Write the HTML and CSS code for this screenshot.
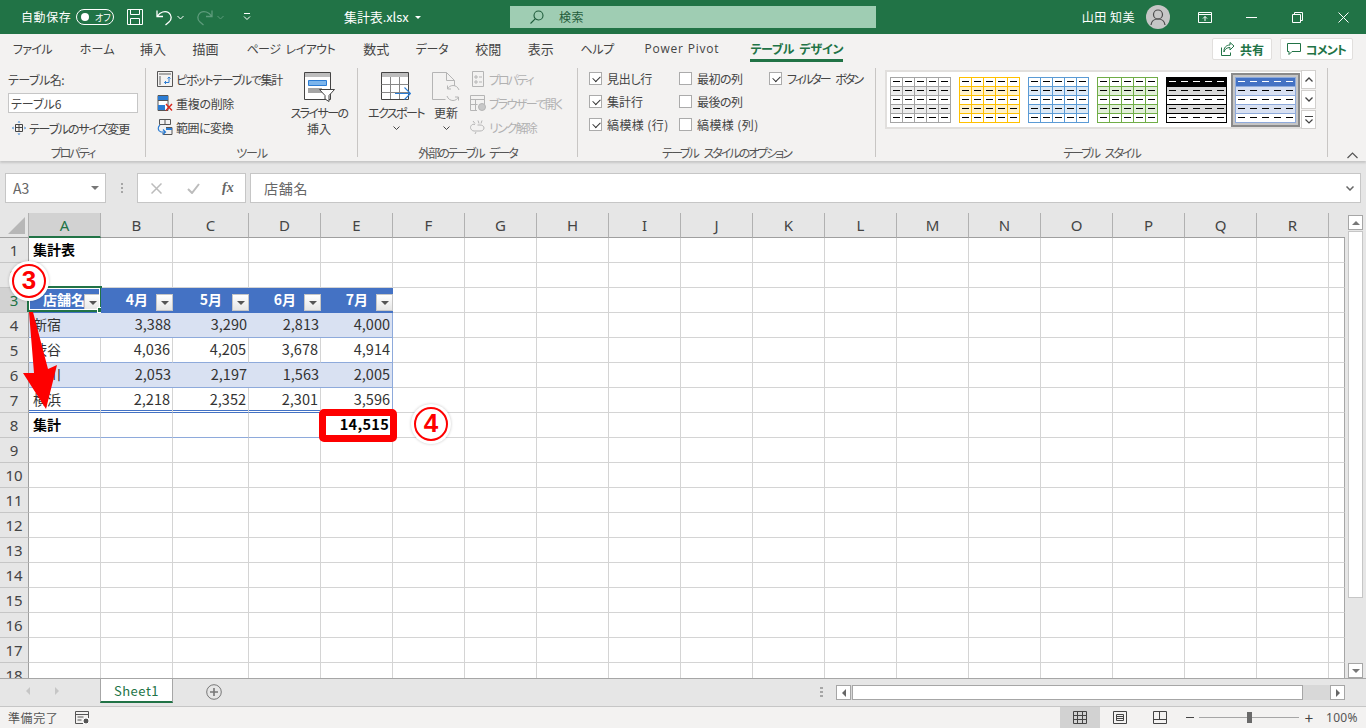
FILE: index.html
```html
<!DOCTYPE html>
<html lang="ja">
<head>
  <meta charset="UTF-8" />
  <title>集計表.xlsx - Excel</title>
  <link rel="stylesheet" href="styles.css">
</head>
<body>
  <!-- shared picture of a table style, coloured through css variables -->
  <svg class="defs" width="0" height="0" aria-hidden="true">
    <symbol id="style-thumb" viewBox="0 0 61 46">
      <rect width="61" height="46" fill="#fff"/>
      <rect y="0" width="61" height="9" fill="var(--head)"/>
      <rect y="9" width="61" height="9" fill="var(--band)"/>
      <rect y="27" width="61" height="9" fill="var(--band)"/>
      <path stroke="var(--vline)" fill="none" d="M12.5 0v46M24.5 0v46M36.5 0v46M48.5 0v46"/>
      <path stroke="var(--line)" fill="none" d="M0 9.5h61M0 18.5h61M0 27.5h61M0 36.5h61"/>
      <rect x=".5" y=".5" width="60" height="45" fill="none" stroke="var(--line)"/>
      <path stroke="var(--hdash)" fill="none" d="M3 4.5h7M15 4.5h7M27 4.5h7M39 4.5h7M51 4.5h7"/>
      <path stroke="#000" fill="none" d="M3 13.5h7M15 13.5h7M27 13.5h7M39 13.5h7M51 13.5h7M3 22.5h7M15 22.5h7M27 22.5h7M39 22.5h7M51 22.5h7M3 31.5h7M15 31.5h7M27 31.5h7M39 31.5h7M51 31.5h7M3 40.5h7M15 40.5h7M27 40.5h7M39 40.5h7M51 40.5h7"/>
    </symbol>
  </svg>

  <header class="titlebar">
    <div class="qat">
      <span class="autosave">自動保存</span>
      <span class="toggle"><i></i><b>オフ</b></span>
      <svg class="qat-save" width="16" height="16" viewBox="0 0 16 16" fill="none" stroke="#fff"><path d="M.5.500h15v15H.5zM3.500.500v5h9v-5M3.500 15.500v-6h9v6"/></svg>
      <svg class="qat-undo" width="17" height="17" viewBox="0 0 17 17" fill="none" stroke="#fff" stroke-width="1.300"><path d="M1 1.500v6h6M1.500 7C4 3 9 1.500 12.500 3.500c3.500 2.500 3.500 7 .5 9.500l-3.500 3"/></svg>
      <svg class="qat-caret" width="7" height="5" viewBox="0 0 7 5" fill="none" stroke="#fff"><path d="M.5 1l3 3 3-3"/></svg>
      <svg class="qat-redo" width="17" height="17" viewBox="0 0 17 17" fill="none" stroke="#5d9b7b" stroke-width="1.300"><path d="M16 1.500v6h-6M15.500 7C13 3 8 1.500 4.500 3.500c-3.500 2.500-3.500 7-.5 9.500l3.500 3"/></svg>
      <svg class="qat-caret" width="7" height="5" viewBox="0 0 7 5" fill="none" stroke="#5d9b7b"><path d="M.5 1l3 3 3-3"/></svg>
      <svg class="qat-more" width="8" height="8" viewBox="0 0 8 8" fill="none" stroke="#fff"><path d="M1 .5h6M1 3.500l3 3 3-3"/></svg>
    </div>
    <div class="filename"><span>集計表.xlsx</span><i class="down-caret"></i></div>
    <div class="search">
      <svg width="14" height="14" viewBox="0 0 14 14" fill="none" stroke="#1f5c3b" stroke-width="1.100"><circle cx="8.500" cy="5.500" r="4.500"/><path d="M5.200 8.800L.5 13.500"/></svg>
      <span>検索</span>
    </div>
    <div class="account">
      <span class="user-name">山田 知美</span>
      <span class="avatar"><svg width="24" height="24" viewBox="0 0 24 24" fill="none" stroke="#4b4b4b" stroke-width="1.200"><circle cx="12" cy="9.500" r="4.500"/><path d="M5 20c.5-4 3.500-6 7-6s6.500 2 7 6"/></svg></span>
      <span class="win-btn"><svg width="14" height="11" viewBox="0 0 14 11" fill="none" stroke="#fff"><path d="M.5.500h13v10H.5zM.5 2.500h13M7 9V4.500M5 6.500l2-2 2 2"/></svg></span>
      <span class="win-btn"><svg width="11" height="1" viewBox="0 0 11 1"><rect width="11" height="1" fill="#fff"/></svg></span>
      <span class="win-btn"><svg width="11" height="11" viewBox="0 0 11 11" fill="none" stroke="#fff"><path d="M.5 2.500h8v8h-8zM2.500 2.500v-2h8v8h-2"/></svg></span>
      <span class="win-btn"><svg width="11" height="11" viewBox="0 0 11 11" fill="none" stroke="#fff"><path d="M.5.500l10 10M10.500.500l-10 10"/></svg></span>
    </div>
  </header>

  <nav class="tabs">
    <a class="tab tab-file">ファイル</a>
    <a class="tab tab-home">ホーム</a>
    <a class="tab tab-kanji">挿入</a>
    <a class="tab tab-kanji">描画</a>
    <a class="tab tab-page">ページ レイアウト</a>
    <a class="tab tab-kanji">数式</a>
    <a class="tab tab-long">データ</a>
    <a class="tab tab-kanji">校閲</a>
    <a class="tab tab-kanji">表示</a>
    <a class="tab tab-long">ヘルプ</a>
    <a class="tab tab-latin">Power Pivot</a>
    <a class="tab tab-active">テーブル デザイン</a>
    <div class="tab-actions">
      <button class="action-btn share-btn"><svg width="15" height="15" viewBox="0 0 15 15" fill="none" stroke="#217346"><path d="M1.500 5.500v8h9v-3M4 10c.5-3 3-4.500 6-4.500V8l4-4-4-3.500V3C6 3 3.500 6 4 10z"/></svg>共有</button>
      <button class="action-btn comment-btn"><svg width="14" height="14" viewBox="0 0 14 14" fill="none" stroke="#217346"><path d="M.5 1.500h13v8H5l-3 3v-3H.5z"/></svg><span class="ls-08">コメント</span></button>
    </div>
  </nav>

  <section class="ribbon">
    <div class="group group-props">
      <div class="group-body props-body">
        <label class="field-label ls-05">テーブル名:</label>
        <input class="name-input" value="テーブル6" />
        <div class="small-cmd resize-cmd">
          <svg width="14" height="16" viewBox="0 0 14 16" fill="none"><path d="M3.500 4.500h7v7h-7zM3.500 7.500h7M7 4.500v7" stroke="#444"/><path d="M7 1L5.500 2.500h3zM7 15l-1.500-1.500h3zM0 8l1.500-1.500v3zM14 8l-1.500-1.500v3z" fill="#2b7cd3"/></svg>
          <span class="ls-12">テーブルのサイズ変更</span>
        </div>
      </div>
      <div class="group-label ls-20">プロパティ</div>
    </div>

    <div class="group group-tools">
      <div class="group-body">
        <div class="small-list tools-list">
          <div class="small-cmd">
            <svg width="16" height="16" viewBox="0 0 16 16" fill="none"><path d="M.5.500h15v15H.5z" stroke="#555"/><path d="M2 2h12v2H2zM2 5h2v9H2z" fill="#aaa"/><path d="M12 6v5.500H7.500M9 10l-1.500 1.500L9 13M10.500 7.500L12 6l1.500 1.500" stroke="#2b7cd3"/></svg>
            <span class="ls-13">ピボットテーブルで集計</span>
          </div>
          <div class="small-cmd">
            <svg width="16" height="16" viewBox="0 0 16 16" fill="none"><path d="M1 .5h10v15H1z" fill="#fff" stroke="#555"/><path d="M1 1h10v4H1zM1 10h7v5H1z" fill="#2b7cd3"/><path d="M1 5.500h10" stroke="#555"/><path d="M9 9l6 6.500M15 9l-6 6.500" stroke="#d9261c" stroke-width="1.400"/></svg>
            <span class="ls-03">重複の削除</span>
          </div>
          <div class="small-cmd">
            <svg width="16" height="16" viewBox="0 0 16 16" fill="none"><path d="M2.500.5h11v5h-11zM8 .5v5" stroke="#555"/><path d="M9 8.500h6v7H6v-2" stroke="#555"/><path d="M9 9h6v2H9z" fill="#2b7cd3"/><path d="M3 6C.5 8 .5 12 4 13h4M6 10.500L8.500 13 6 15.500" stroke="#2b7cd3" stroke-width="1.200"/></svg>
            <span class="ls-05">範囲に変換</span>
          </div>
        </div>
        <div class="large-cmd slicer-cmd">
          <svg width="31" height="30" viewBox="0 0 31 30" fill="none"><path d="M.5.500h26v27H.5z" fill="#fff" stroke="#444"/><path d="M1 1h25v4H1z" fill="#bdbdbd"/><path d="M4.500 8.500h18v5h-18z" fill="#7cb5ec" stroke="#2b7cd3"/><path d="M4 16h14v5H4z" fill="#a5a5a5"/><path d="M15.500 17.500h15l-5.500 6v6l-4-2.500v-3.500z" fill="#fff" stroke="#444"/></svg>
          <span><span class="ls-16">スライサーの</span><br>挿入</span>
        </div>
      </div>
      <div class="group-label ls-12">ツール</div>
    </div>

    <div class="group group-external">
      <div class="group-body">
        <div class="large-cmd export-cmd">
          <svg width="30" height="28" viewBox="0 0 30 28" fill="none"><path d="M.5.500h27v27H.5z" fill="#fff" stroke="#444"/><path d="M1 1h26v4H1z" fill="#bdbdbd"/><path d="M.5 12.500h27M.5 20.500h27M9.500 5v22M18.500 5v22" stroke="#888"/><path d="M14 21.500h15M23.500 15.500l6 6-6 6" stroke="#2b7cd3" stroke-width="1.100"/></svg>
          <span class="ls-16">エクスポート</span>
          <svg class="chev" width="7" height="4" viewBox="0 0 7 4" fill="none" stroke="#444"><path d="M.5.500l3 3 3-3"/></svg>
        </div>
        <div class="large-cmd refresh-cmd">
          <svg width="28" height="29" viewBox="0 0 28 29" fill="none" stroke="#b5b5b5"><path d="M.5.500h14l8 8V14M14.500.500v8h8M.5.500v27h13"/><path d="M27 18c-1-3-3.500-4.500-6-4.500-2.500 0-4.500 1.500-5.500 3.500M15.500 13.500V17h3.500M15 24c1 3 3.500 4.500 6 4.500s4.500-1.500 5.500-3.500M26.500 28.500V25H23"/></svg>
          <span>更新</span>
          <svg class="chev" width="7" height="4" viewBox="0 0 7 4" fill="none" stroke="#444"><path d="M.5.500l3 3 3-3"/></svg>
        </div>
        <div class="small-list external-list">
          <div class="small-cmd cmd-off">
            <svg width="16" height="16" viewBox="-2 0 16 16" fill="none" stroke="#b5b5b5"><path d="M.5.500h11v15H.5zM3 5h2v2H3zM7 6h3M3 10h2v2H3zM7 11h3"/></svg>
            <span class="ls-20">プロパティ</span>
          </div>
          <div class="small-cmd cmd-off">
            <svg width="16" height="16" viewBox="0 0 16 16" fill="none" stroke="#b5b5b5"><path d="M.5.500h14v9M7 15.500H.5V.500M.5 4.500h14M.5 9.500h7M5.500 4.500v11"/><circle cx="12" cy="12" r="3.500" fill="#c8c8c8"/></svg>
            <span class="ls-16">ブラウザーで開く</span>
          </div>
          <div class="small-cmd cmd-off">
            <svg width="16" height="16" viewBox="0 0 16 16" fill="none" stroke="#b5b5b5"><path d="M5 5.500C2 4.500.5 7 .5 8.500S2 12 4 12h6c2 0 4-1 4-3s-2-3-4-3H7.500M8 1.500l1 3M3 2l2 2.500M12 1.500l-1 3M5 15l1-2"/></svg>
            <span class="ls-16">リンク解除</span>
          </div>
        </div>
      </div>
      <div class="group-label ls-20 ws-gap">外部のテーブル データ</div>
    </div>

    <div class="group group-options">
      <div class="group-body options-grid">
        <label class="opt ls-03"><i class="check on"></i>見出し行</label>
        <label class="opt ls-05"><i class="check"></i>最初の列</label>
        <label class="opt ls-20 ws-gap"><i class="check on"></i>フィルター ボタン</label>
        <label class="opt"><i class="check on"></i>集計行</label>
        <label class="opt ls-05"><i class="check"></i>最後の列</label>
        <span></span>
        <label class="opt opt-wide"><i class="check on"></i>縞模様 (行)</label>
        <label class="opt opt-wide"><i class="check"></i>縞模様 (列)</label>
        <span></span>
      </div>
      <div class="group-label ls-20 ws-gap">テーブル スタイルのオプション</div>
    </div>

    <div class="group group-styles">
      <div class="group-body">
        <div class="gallery">
          <div class="gallery-items">
            <svg class="thumb th-gray"><use href="#style-thumb"/></svg>
            <svg class="thumb th-gold"><use href="#style-thumb"/></svg>
            <svg class="thumb th-blue"><use href="#style-thumb"/></svg>
            <svg class="thumb th-green"><use href="#style-thumb"/></svg>
            <svg class="thumb th-black"><use href="#style-thumb"/></svg>
            <span class="thumb-picked"><svg class="thumb th-picked"><use href="#style-thumb"/></svg></span>
          </div>
          <div class="gallery-arrows">
            <span><svg width="8" height="5" viewBox="0 0 8 5" fill="none" stroke="#444" stroke-width="1.300"><path d="M.5 4.500L4 1l3.500 3.500"/></svg></span>
            <span><svg width="8" height="5" viewBox="0 0 8 5" fill="none" stroke="#444" stroke-width="1.300"><path d="M.5.500L4 4l3.500-3.500"/></svg></span>
            <span><svg width="8" height="8" viewBox="0 0 8 8" fill="none" stroke="#444" stroke-width="1.200"><path d="M0 .5h8M.5 3.500L4 7l3.500-3.500"/></svg></span>
          </div>
        </div>
      </div>
      <div class="group-label ls-20 ws-gap">テーブル スタイル</div>
    </div>
    <svg class="collapse" width="11" height="7" viewBox="0 0 11 7" fill="none" stroke="#555" stroke-width="1.200"><path d="M.5 6l5-5 5 5"/></svg>
  </section>

  <section class="formula-bar">
    <div class="name-box"><span>A3</span><i class="small-tri"></i></div>
    <div class="fx-dots"><i></i><i></i><i></i></div>
    <div class="fx-buttons">
      <svg width="11" height="11" viewBox="0 0 11 11" fill="none" stroke="#bcbcbc" stroke-width="1.500"><path d="M.5.500l10 10M10.500.500l-10 10"/></svg>
      <svg width="13" height="11" viewBox="0 0 13 11" fill="none" stroke="#bcbcbc" stroke-width="2"><path d="M1 6l4 4 7-9"/></svg>
      <span class="fx-label">fx</span>
    </div>
    <div class="fx-input">店舗名<svg width="8" height="5" viewBox="0 0 8 5" fill="none" stroke="#666" stroke-width="1.500"><path d="M.5.500L4 4l3.500-3.500"/></svg></div>
  </section>

  <section class="sheet-main">
    <div class="grid-wrap">
      <table class="grid">
        <colgroup>
          <col class="c-head"><col class="c-72"><col class="c-72"><col class="c-76">
          <col class="c-72"><col class="c-72"><col class="c-72"><col class="c-72"><col class="c-72"><col class="c-72">
          <col class="c-72"><col class="c-72"><col class="c-72"><col class="c-72"><col class="c-72"><col class="c-72">
          <col class="c-72"><col class="c-72"><col class="c-72"><col class="c-s">
        </colgroup>
        <thead>
          <tr><th class="corner"><i></i></th><th class="col-on">A</th><th>B</th><th>C</th><th>D</th><th>E</th><th>F</th><th>G</th><th>H</th><th>I</th><th>J</th><th>K</th><th>L</th><th>M</th><th>N</th><th>O</th><th>P</th><th>Q</th><th>R</th><th class="col-s"></th></tr>
        </thead>
        <tbody>
          <tr><th>1</th><td class="bold txt">集計表</td><td></td><td></td><td></td><td></td><td></td><td></td><td></td><td></td><td></td><td></td><td></td><td></td><td></td><td></td><td></td><td></td><td></td><td></td></tr>
          <tr><th>2</th><td></td><td></td><td></td><td></td><td></td><td></td><td></td><td></td><td></td><td></td><td></td><td></td><td></td><td></td><td></td><td></td><td></td><td></td><td></td></tr>
          <tr>
            <th class="row-on">3</th>
            <td class="hd hd-first">店舗名<i class="filter"></i><i class="sel-box"><b></b></i></td>
            <td class="hd">4月<i class="filter"></i></td>
            <td class="hd hd-wide">5月<i class="filter"></i></td>
            <td class="hd">6月<i class="filter"></i></td>
            <td class="hd">7月<i class="filter"></i></td>
            <td></td><td></td><td></td><td></td><td></td><td></td><td></td><td></td><td></td><td></td><td></td><td></td><td></td><td></td>
          </tr>
          <tr class="band">
            <th>4</th><td class="txt">新宿</td><td>3,388</td><td>3,290</td><td>2,813</td><td class="edge">4,000</td>
            <td></td><td></td><td></td><td></td><td></td><td></td><td></td><td></td><td></td><td></td><td></td><td></td><td></td><td></td>
          </tr>
          <tr class="plain">
            <th>5</th><td class="txt">渋谷</td><td>4,036</td><td>4,205</td><td>3,678</td><td class="edge">4,914</td>
            <td></td><td></td><td></td><td></td><td></td><td></td><td></td><td></td><td></td><td></td><td></td><td></td><td></td><td></td>
          </tr>
          <tr class="band">
            <th>6</th><td class="txt">品川</td><td>2,053</td><td>2,197</td><td>1,563</td><td class="edge">2,005</td>
            <td></td><td></td><td></td><td></td><td></td><td></td><td></td><td></td><td></td><td></td><td></td><td></td><td></td><td></td>
          </tr>
          <tr class="plain last-data">
            <th>7</th><td class="txt">横浜</td><td>2,218</td><td>2,352</td><td>2,301</td><td class="edge">3,596</td>
            <td></td><td></td><td></td><td></td><td></td><td></td><td></td><td></td><td></td><td></td><td></td><td></td><td></td><td></td>
          </tr>
          <tr class="total">
            <th>8</th><td class="bold txt">集計</td><td></td><td></td><td></td><td class="bold total-cell">14,515<i class="red-box"></i><i class="callout callout-4">4</i></td>
            <td></td><td></td><td></td><td></td><td></td><td></td><td></td><td></td><td></td><td></td><td></td><td></td><td></td><td></td>
          </tr>
          <tr><th>9</th><td></td><td></td><td></td><td></td><td></td><td></td><td></td><td></td><td></td><td></td><td></td><td></td><td></td><td></td><td></td><td></td><td></td><td></td><td></td></tr>
          <tr><th>10</th><td></td><td></td><td></td><td></td><td></td><td></td><td></td><td></td><td></td><td></td><td></td><td></td><td></td><td></td><td></td><td></td><td></td><td></td><td></td></tr>
          <tr><th>11</th><td></td><td></td><td></td><td></td><td></td><td></td><td></td><td></td><td></td><td></td><td></td><td></td><td></td><td></td><td></td><td></td><td></td><td></td><td></td></tr>
          <tr><th>12</th><td></td><td></td><td></td><td></td><td></td><td></td><td></td><td></td><td></td><td></td><td></td><td></td><td></td><td></td><td></td><td></td><td></td><td></td><td></td></tr>
          <tr><th>13</th><td></td><td></td><td></td><td></td><td></td><td></td><td></td><td></td><td></td><td></td><td></td><td></td><td></td><td></td><td></td><td></td><td></td><td></td><td></td></tr>
          <tr><th>14</th><td></td><td></td><td></td><td></td><td></td><td></td><td></td><td></td><td></td><td></td><td></td><td></td><td></td><td></td><td></td><td></td><td></td><td></td><td></td></tr>
          <tr><th>15</th><td></td><td></td><td></td><td></td><td></td><td></td><td></td><td></td><td></td><td></td><td></td><td></td><td></td><td></td><td></td><td></td><td></td><td></td><td></td></tr>
          <tr><th>16</th><td></td><td></td><td></td><td></td><td></td><td></td><td></td><td></td><td></td><td></td><td></td><td></td><td></td><td></td><td></td><td></td><td></td><td></td><td></td></tr>
          <tr><th>17</th><td></td><td></td><td></td><td></td><td></td><td></td><td></td><td></td><td></td><td></td><td></td><td></td><td></td><td></td><td></td><td></td><td></td><td></td><td></td></tr>
          <tr><th>18</th><td></td><td></td><td></td><td></td><td></td><td></td><td></td><td></td><td></td><td></td><td></td><td></td><td></td><td></td><td></td><td></td><td></td><td></td><td></td></tr>
        </tbody>
      </table>
      <svg class="red-arrow" width="40" height="100" viewBox="0 0 40 100"><path d="M7 0h4l15 57 9-4-11 44L1 61l11 0z" fill="#fe0000"/></svg>
      <i class="callout callout-3">3</i>
    </div>
    <div class="vscroll">
      <span class="sb-btn"><i class="tri-up"></i></span>
      <span class="sb-thumb"></span>
      <span class="sb-btn sb-end"><i class="tri-down"></i></span>
    </div>
  </section>

  <section class="sheet-bar">
    <div class="sheet-nav"><i class="tri-left"></i><i class="tri-right"></i></div>
    <div class="sheet-tab">Sheet1</div>
    <svg class="add-sheet" width="16" height="16" viewBox="0 0 16 16" fill="none" stroke="#777"><circle cx="8" cy="8" r="7.300"/><path d="M8 4v8M4 8h8" stroke-width="1.600"/></svg>
    <div class="bar-dots"><i></i><i></i><i></i></div>
    <div class="hscroll">
      <span class="sb-btn"><i class="tri-left dark"></i></span>
      <span class="hs-thumb"></span>
      <span class="sb-btn hs-end"><i class="tri-right dark"></i></span>
    </div>
  </section>

  <footer class="statusbar">
    <span class="status-text">準備完了</span>
    <svg class="macro" width="15" height="14" viewBox="0 0 15 14" fill="none" stroke="#555"><path d="M8 12.500H.5v-12h13V7M.5 3.500h13M2.500 6h6M2.500 9h4"/><circle cx="11" cy="10" r="3" fill="#555" stroke="#fff"/></svg>
    <div class="view-btns">
      <span class="view-btn view-on"><svg width="14" height="13" viewBox="0 0 14 13" fill="none" stroke="#444"><path d="M.5.500h13v12H.5zM.5 4.500h13M.5 8.500h13M4.500.500v12M9.500.500v12"/></svg></span>
      <span class="view-btn"><svg width="14" height="13" viewBox="0 0 14 13" fill="none" stroke="#444"><path d="M.5.500h13v12H.5zM3.500 3.500h7v6h-7zM3.500 5.500h7M3.500 7.500h7"/></svg></span>
      <span class="view-btn"><svg width="14" height="13" viewBox="0 0 14 13" fill="none" stroke="#444"><path d="M.5.500h13v12H.5zM.5 8.500h13M6.500.500v8"/></svg></span>
    </div>
    <div class="zoom-ctl">
      <i class="zoom-minus"></i>
      <span class="zoom-track"><i></i></span>
      <span class="zoom-plus">+</span>
      <span class="zoom-val">100%</span>
    </div>
  </footer>
</body>
</html>
```

FILE: styles.css
```css
/* Reset and base */
* {
  box-sizing: border-box;
  margin: 0;
  padding: 0;
}
html, body {
  height: 728px;
  overflow: hidden;
  background: #e6e6e6;
  color: #444;
  font-family: "Noto Sans CJK JP", "Noto Sans", sans-serif;
  font-size: 12px;
  font-feature-settings: "palt";
}
i { font-style: normal; display: block; }
svg { display: block; flex: none; }
.defs { position: absolute; }

/* Meiryo UI kana run narrower than Noto, so tighten by hand */
.ls-03 { letter-spacing: -0.3px; }
.ls-05 { letter-spacing: -0.5px; }
.ls-08 { letter-spacing: -0.8px; }
.ls-12 { letter-spacing: -1.2px; }
.ls-13 { letter-spacing: -1.3px; }
.ls-16 { letter-spacing: -1.6px; }
.ls-20 { letter-spacing: -2px; }
.ws-gap { word-spacing: 5px; }

/* Title bar */
.titlebar {
  display: flex;
  align-items: center;
  height: 34px;
  background: #217346;
  color: #fff;
}
.qat {
  display: flex;
  align-items: center;
  width: 344px;
  padding-left: 21px;
  flex: none;
}
.autosave { width: 55px; letter-spacing: 0.6px; margin-bottom: 2px; }
.toggle {
  display: flex;
  align-items: center;
  width: 38px;
  height: 16px;
  border: 1px solid #fff;
  border-radius: 8px;
  padding-left: 4px;
}
.toggle i { width: 8px; height: 8px; border-radius: 50%; background: #fff; }
.toggle b { font-weight: 400; font-size: 9px; margin-left: 6px; }
.qat-save { margin-left: 13px; }
.qat-undo { margin-left: 13px; }
.qat-caret { margin-left: 4px; }
.qat-redo { margin-left: 12px; }
.qat-more { margin-left: 19px; }
.filename {
  display: flex;
  align-items: center;
  width: 166px;
  flex: none;
  font-size: 13px;
}
.filename span { margin-bottom: 2px; letter-spacing: -0.1px; }
.down-caret {
  width: 0;
  height: 0;
  margin-left: 6px;
  border: 3px solid transparent;
  border-top-color: #fff;
  border-bottom: 0;
}
.search {
  display: flex;
  align-items: center;
  width: 366px;
  height: 22px;
  flex: none;
  padding-left: 20px;
  background: #9fcdb3;
  color: #1f5c3b;
}
.search span { margin: 0 0 2px 15px; letter-spacing: 0.5px; }
.account {
  display: flex;
  align-items: center;
  justify-content: flex-end;
  flex: 1;
}
.user-name { letter-spacing: 0.5px; margin-bottom: 2px; }
.avatar {
  width: 24px;
  height: 24px;
  margin: 0 12px 0 11px;
  border-radius: 50%;
  background: #c6c6c6;
}
.win-btn {
  display: flex;
  align-items: center;
  justify-content: center;
  width: 46px;
  height: 34px;
}

/* Ribbon tabs */
.tabs {
  display: flex;
  align-items: center;
  gap: 27px;
  height: 30px;
  padding: 0 13px;
  background: #f3f2f1;
}
.tab { position: relative; line-height: 30px; white-space: nowrap; }
.tab-file { letter-spacing: -0.7px; margin-right: 1px; }
.tab-home { letter-spacing: 0.3px; margin-right: -2px; }
.tab-kanji { font-size: 13px; margin-right: -0.5px; }
.tab-long { letter-spacing: -0.3px; }
.tab-page { letter-spacing: -0.55px; word-spacing: 3px; margin: 0 1px 0 1.5px; }
.tab-latin { font-family: "Open Sans", sans-serif; letter-spacing: 0.8px; margin: 0 4px 0 3.5px; }
.tab-active { color: #217346; font-weight: 700; letter-spacing: -0.3px; word-spacing: 3px; }
.tab-active::after {
  content: "";
  position: absolute;
  left: 0;
  right: 0;
  bottom: 2px;
  height: 3px;
  background: #217346;
}
.tab-actions { display: flex; gap: 8px; margin-left: auto; }
.action-btn {
  display: flex;
  align-items: center;
  justify-content: center;
  gap: 5px;
  height: 22px;
  background: #fff;
  border: 1px solid #e1dfdd;
  border-radius: 2px;
  color: #217346;
  font: inherit;
  font-weight: 700;
}
.share-btn { width: 60px; }
.comment-btn { width: 73px; }

/* Ribbon body */
.ribbon {
  position: relative;
  display: flex;
  height: 97px;
  padding-top: 4px;
  background: #f3f2f1;
  box-shadow: 0 2px 2px rgba(0, 0, 0, 0.14);
}
.group {
  display: flex;
  flex-direction: column;
  height: 89px;
  border-right: 1px solid #c8c6c4;
  flex: none;
}
.group-body { display: flex; flex: 1; }
.group-label {
  height: 17px;
  margin-bottom: -4px;
  line-height: 17px;
  text-align: center;
  color: #555;
}
.group-props { width: 146px; }
.group-tools { width: 212px; }
.group-external { width: 220px; }
.group-options { width: 298px; }
.group-styles { width: 452px; }
.props-body { flex-direction: column; padding: 2px 0 0 8px; }
.field-label { height: 23px; line-height: 20px; }
.name-input {
  width: 130px;
  height: 20px;
  padding-left: 2px;
  border: 1px solid #c6c6c6;
  background: #fff;
  color: #444;
  font: inherit;
  flex: none;
}
.resize-cmd { margin: 3px 0 0 4px; }
.resize-cmd span { margin-left: 4px; }
.small-list { display: flex; flex-direction: column; margin-top: -1px; }
.small-cmd {
  display: flex;
  align-items: center;
  height: 24px;
  white-space: nowrap;
}
.small-cmd span { margin-left: 3px; }
.cmd-off { color: #b1b1b1; }
.tools-list { margin-left: 11px; width: 132px; }
.large-cmd {
  display: flex;
  flex-direction: column;
  align-items: center;
  text-align: center;
  line-height: 16px;
  white-space: nowrap;
}
.slicer-cmd { width: 60px; margin-top: 4px; }
.slicer-cmd > span { margin-top: 3px; }
.export-cmd { width: 60px; margin: 4px 0 0 8px; }
.export-cmd > span { margin-top: 5px; }
.refresh-cmd { width: 32px; margin: 4px 0 0 4px; }
.refresh-cmd > span { margin-top: 4px; }
.chev { margin-top: 5px; }
.external-list { margin-left: 8px; }
.options-grid {
  display: grid;
  grid-template-columns: 90px 90px 1fr;
  grid-auto-rows: 23px;
  padding: 0 0 0 11px;
  margin-top: -1px;
  align-content: start;
}
.opt { display: flex; align-items: center; white-space: nowrap; }
.opt-wide { letter-spacing: 0.4px; }
.check {
  position: relative;
  width: 13px;
  height: 13px;
  margin-right: 5px;
  background: #fff;
  border: 1px solid #ababab;
  flex: none;
}
.check.on::after {
  content: "";
  position: absolute;
  left: 3px;
  top: 1px;
  width: 6px;
  height: 4px;
  border-left: 1px solid #333;
  border-bottom: 1px solid #333;
  transform: rotate(-45deg) translate(-1px, 1px);
}

/* Style gallery */
.gallery {
  display: flex;
  width: 431px;
  height: 59px;
  margin: 2px 0 0 9px;
}
.gallery-items {
  display: flex;
  align-items: center;
  gap: 8px;
  width: 416px;
  padding-left: 3px;
  background: #fff;
  border: 2px solid #e1dfdd;
  border-right: 0;
}
.thumb {
  width: 61px;
  height: 46px;
  --head: #fff;
  --band: #fff;
  --line: #a5a5a5;
  --vline: #a5a5a5;
  --hdash: #000;
}
.th-gray { --band: #ededed; }
.th-gold { --band: #fff2cc; --line: #ffc000; --vline: #ffc000; }
.th-blue { --band: #deeaf6; --line: #5b9bd5; --vline: #5b9bd5; }
.th-green { --band: #e2efd9; --line: #70ad47; --vline: #70ad47; }
.th-black { --head: #000; --band: #d9d9d9; --line: #000; --vline: none; --hdash: #fff; }
.th-picked { --head: #4472c4; --band: #d9e1f2; --line: #8eaadb; --vline: none; --hdash: #fff; }
.thumb-picked {
  display: block;
  margin-left: -4px;
  padding: 2px 2px;
  background: #c6c6c6;
  border: 2px solid #8a8a8a;
}
.gallery-arrows {
  display: flex;
  flex-direction: column;
  width: 15px;
  gap: 1px;
}
.gallery-arrows span {
  display: flex;
  flex: 1;
  align-items: center;
  justify-content: center;
  background: #fff;
  border: 1px solid #d2d0ce;
}
.collapse { position: absolute; left: 1347px; bottom: 2px; }

/* Formula bar */
.formula-bar {
  display: flex;
  height: 52px;
  padding: 12px 5px 0;
  background: #e6e6e6;
}
.name-box, .fx-buttons, .fx-input {
  display: flex;
  align-items: center;
  height: 30px;
  background: #fff;
  border: 1px solid #c6c6c6;
}
.name-box {
  justify-content: space-between;
  width: 101px;
  padding: 0 6px 0 7px;
  font-size: 14px;
  color: #666;
}
.small-tri {
  width: 0;
  height: 0;
  border: 4px solid transparent;
  border-top-color: #777;
  border-bottom: 0;
}
.fx-dots {
  display: flex;
  flex-direction: column;
  justify-content: center;
  gap: 2px;
  width: 31px;
  height: 30px;
  padding-left: 15px;
}
.fx-dots i { width: 2px; height: 2px; background: #a6a6a6; }
.fx-buttons { width: 109px; padding-left: 13px; gap: 25px; }
.fx-label { font-family: "Liberation Serif", serif; font-style: italic; font-weight: 700; font-size: 14px; color: #666; margin-left: -3px; }
.fx-input {
  justify-content: space-between;
  flex: 1;
  margin-left: 4px;
  padding: 0 6px 0 13px;
  font-size: 14px;
  letter-spacing: 0.8px;
  color: #666;
}

/* Sheet grid */
.sheet-main { display: flex; height: 465px; }
.grid-wrap {
  position: relative;
  width: 1345px;
  height: 465px;
  overflow: hidden;
  flex: none;
}
.grid {
  table-layout: fixed;
  width: 1345px;
  border-collapse: separate;
  border-spacing: 0;
  font-size: 14.5px;
  line-height: 20px;
  color: #333;
}
.c-head { width: 29px; }
.c-72 { width: 72px; }
.c-76 { width: 76px; }
.c-s { width: 16px; }
.grid tr { height: 25px; }
.grid th {
  font-weight: 400;
  font-size: 15px;
  color: #444;
  background: #e6e6e6;
  border-right: 1px solid #b1b1b1;
  border-bottom: 1px solid #b1b1b1;
  font-family: "Noto Sans", sans-serif;
}
.grid tbody th { padding-bottom: 1px; border-right-color: #9f9f9f; border-bottom-color: #c6c6c6; }
.grid thead th { border-bottom-color: #9f9f9f; }
.grid thead th.col-s { border-right: 0; }
.grid td {
  height: 25px;
  padding: 0 2px 2px 0;
  text-align: right;
  background: #fff;
  border-right: 1px solid #d4d4d4;
  border-bottom: 1px solid #d4d4d4;
  white-space: nowrap;
}
.grid td:last-child { border-right-color: #a6a6a6; }
.grid td.txt { padding: 0 0 2px 4px; text-align: left; font-size: 14px; }
.grid td.bold { font-weight: 700; color: #000; }
.corner { position: relative; }
.corner i {
  position: absolute;
  right: 3px;
  bottom: 3px;
  width: 0;
  height: 0;
  border-style: solid;
  border-width: 0 0 17px 17px;
  border-color: transparent transparent #b7b7b7 transparent;
}
.grid th.col-on { background: #d2d2d2; color: #217346; border-bottom: 2px solid #217346; }
.grid th.row-on { background: #d2d2d2; color: #217346; }

/* Table inside the sheet */
.grid td.hd {
  position: relative;
  padding-right: 25px;
  background: #4472c4;
  color: #fff;
  font-weight: 700;
  font-size: 14px;
  border: 0;
  border-bottom: 1px solid #4472c4;
}
.grid td.hd-wide { padding-right: 27px; }
.grid td.hd-first { padding: 0 0 2px 14px; text-align: left; }
.filter {
  position: absolute;
  right: 0;
  bottom: 1px;
  width: 17px;
  height: 17px;
  background: linear-gradient(#fff, #e6e6e6);
  border: 1px solid #c6c6c6;
}
.filter::after {
  content: "";
  position: absolute;
  left: 4px;
  top: 6px;
  border: 4px solid transparent;
  border-top-color: #555;
  border-bottom: 0;
}
.sel-box {
  position: absolute;
  left: -2px;
  top: -2px;
  right: -1px;
  bottom: 0;
  border: 2px solid #217346;
  box-shadow: inset 0 0 0 1px #fff;
}
.sel-box b {
  position: absolute;
  right: -3px;
  bottom: -3px;
  width: 6px;
  height: 6px;
  background: #217346;
  border: 1px solid #fff;
}
.band td:nth-child(-n+6) {
  background: #d9e1f2;
  border-right: 0;
  border-bottom-color: #8eaadb;
}
.plain td:nth-child(-n+6) { border-bottom-color: #8eaadb; }
.last-data td:nth-child(-n+6) {
  border-bottom: 1px solid #4472c4;
  box-shadow: inset 0 -1px 0 #fff, inset 0 -2px 0 #4472c4;
}
.grid td.edge { border-right: 1px solid #8eaadb; }
.total td:nth-child(-n+6) { border-bottom-color: #8eaadb; }
.grid td.total-cell { position: relative; padding-right: 3px; letter-spacing: 0.3px; }

/* Annotations drawn over the sheet */
.red-box {
  position: absolute;
  left: -2px;
  top: -4px;
  width: 78px;
  height: 33px;
  border: 7px solid #fe0000;
  border-radius: 5px;
}
.callout {
  position: absolute;
  width: 34px;
  height: 34px;
  line-height: 29px;
  text-align: center;
  color: #fe0000;
  font-family: "Liberation Sans", sans-serif;
  font-weight: 700;
  font-size: 26px;
  letter-spacing: 0;
  background: #fff;
  border: 2px solid #fe0000;
  border-radius: 50%;
  box-shadow: 0 0 0 3px #fff, 0 0 3px 3px rgba(0, 0, 0, 0.22);
}
.callout-3 { left: 12px; top: 51px; }
.callout-4 { left: 93px; top: -6px; }
.red-arrow { position: absolute; left: 22px; top: 99px; }

/* Scroll bars */
.sb-btn {
  display: flex;
  align-items: center;
  justify-content: center;
  width: 15px;
  height: 15px;
  background: #fff;
  border: 1px solid #a6a6a6;
  flex: none;
}
.vscroll {
  display: flex;
  flex-direction: column;
  flex: 1;
  padding: 2px 3px 0;
  background: #e6e6e6;
}
.sb-thumb {
  height: 367px;
  margin-top: 1px;
  background: #fff;
  border: 1px solid #c6c6c6;
}
.sb-end { margin-top: auto; }
.tri-up, .tri-down, .tri-left, .tri-right { width: 0; height: 0; border: 4px solid transparent; }
.tri-up { border-top: 0; border-bottom-color: #777; }
.tri-down { border-bottom: 0; border-top-color: #777; }
.tri-left { border-left: 0; border-right-color: #c6c6c6; }
.tri-right { border-right: 0; border-left-color: #c6c6c6; }
.tri-left.dark { border-right-color: #666; }
.tri-right.dark { border-left-color: #666; }

/* Sheet tabs */
.sheet-bar {
  display: flex;
  height: 28px;
  background: #e6e6e6;
  border-top: 1px solid #a6a6a6;
}
.sheet-nav {
  display: flex;
  align-items: center;
  gap: 25px;
  width: 100px;
  height: 23px;
  padding-left: 26px;
}
.sheet-tab {
  width: 73px;
  height: 24px;
  line-height: 23px;
  text-align: center;
  background: #fff;
  color: #217346;
  font-size: 13px;
  letter-spacing: 0.5px;
  border-left: 1px solid #a6a6a6;
  border-right: 1px solid #a6a6a6;
  border-bottom: 2px solid #217346;
}
.add-sheet { margin: 5px 0 0 33px; }
.bar-dots {
  display: flex;
  flex-direction: column;
  gap: 2px;
  margin: 8px 0 0 598px;
}
.bar-dots i { width: 3px; height: 2px; background: #a6a6a6; }
.hscroll {
  display: flex;
  width: 509px;
  height: 15px;
  margin: 6px 0 0 13px;
  background: #d8d8d8;
}
.hs-thumb {
  width: 451px;
  height: 15px;
  margin-left: 1px;
  background: #fff;
  border: 1px solid #a6a6a6;
}
.hs-end { margin-left: auto; }

/* Status bar */
.statusbar {
  display: flex;
  align-items: center;
  height: 22px;
  padding-left: 8px;
  background: #f3f2f1;
  border-top: 1px solid #c6c6c6;
}
.status-text { width: 67px; letter-spacing: 0.6px; color: #555; }
.view-btns { display: flex; margin-left: 970px; }
.view-btn {
  display: flex;
  align-items: center;
  justify-content: center;
  width: 40px;
  height: 21px;
}
.view-on { background: #d2d2d2; }
.zoom-ctl { display: flex; align-items: center; margin-left: 6px; }
.zoom-minus { width: 8px; height: 1px; background: #444; }
.zoom-track {
  position: relative;
  display: block;
  width: 100px;
  height: 1px;
  margin-left: 5px;
  background: #a6a6a6;
}
.zoom-track i {
  position: absolute;
  left: 48px;
  top: -5px;
  width: 5px;
  height: 11px;
  background: #6a6a6a;
}
.zoom-plus { margin-left: 4px; width: 12px; font-size: 15px; line-height: 16px; color: #444; text-align: center; }
.zoom-val { margin-left: 11px; letter-spacing: 0.3px; color: #555; font-family: "Noto Sans", sans-serif; }
```
